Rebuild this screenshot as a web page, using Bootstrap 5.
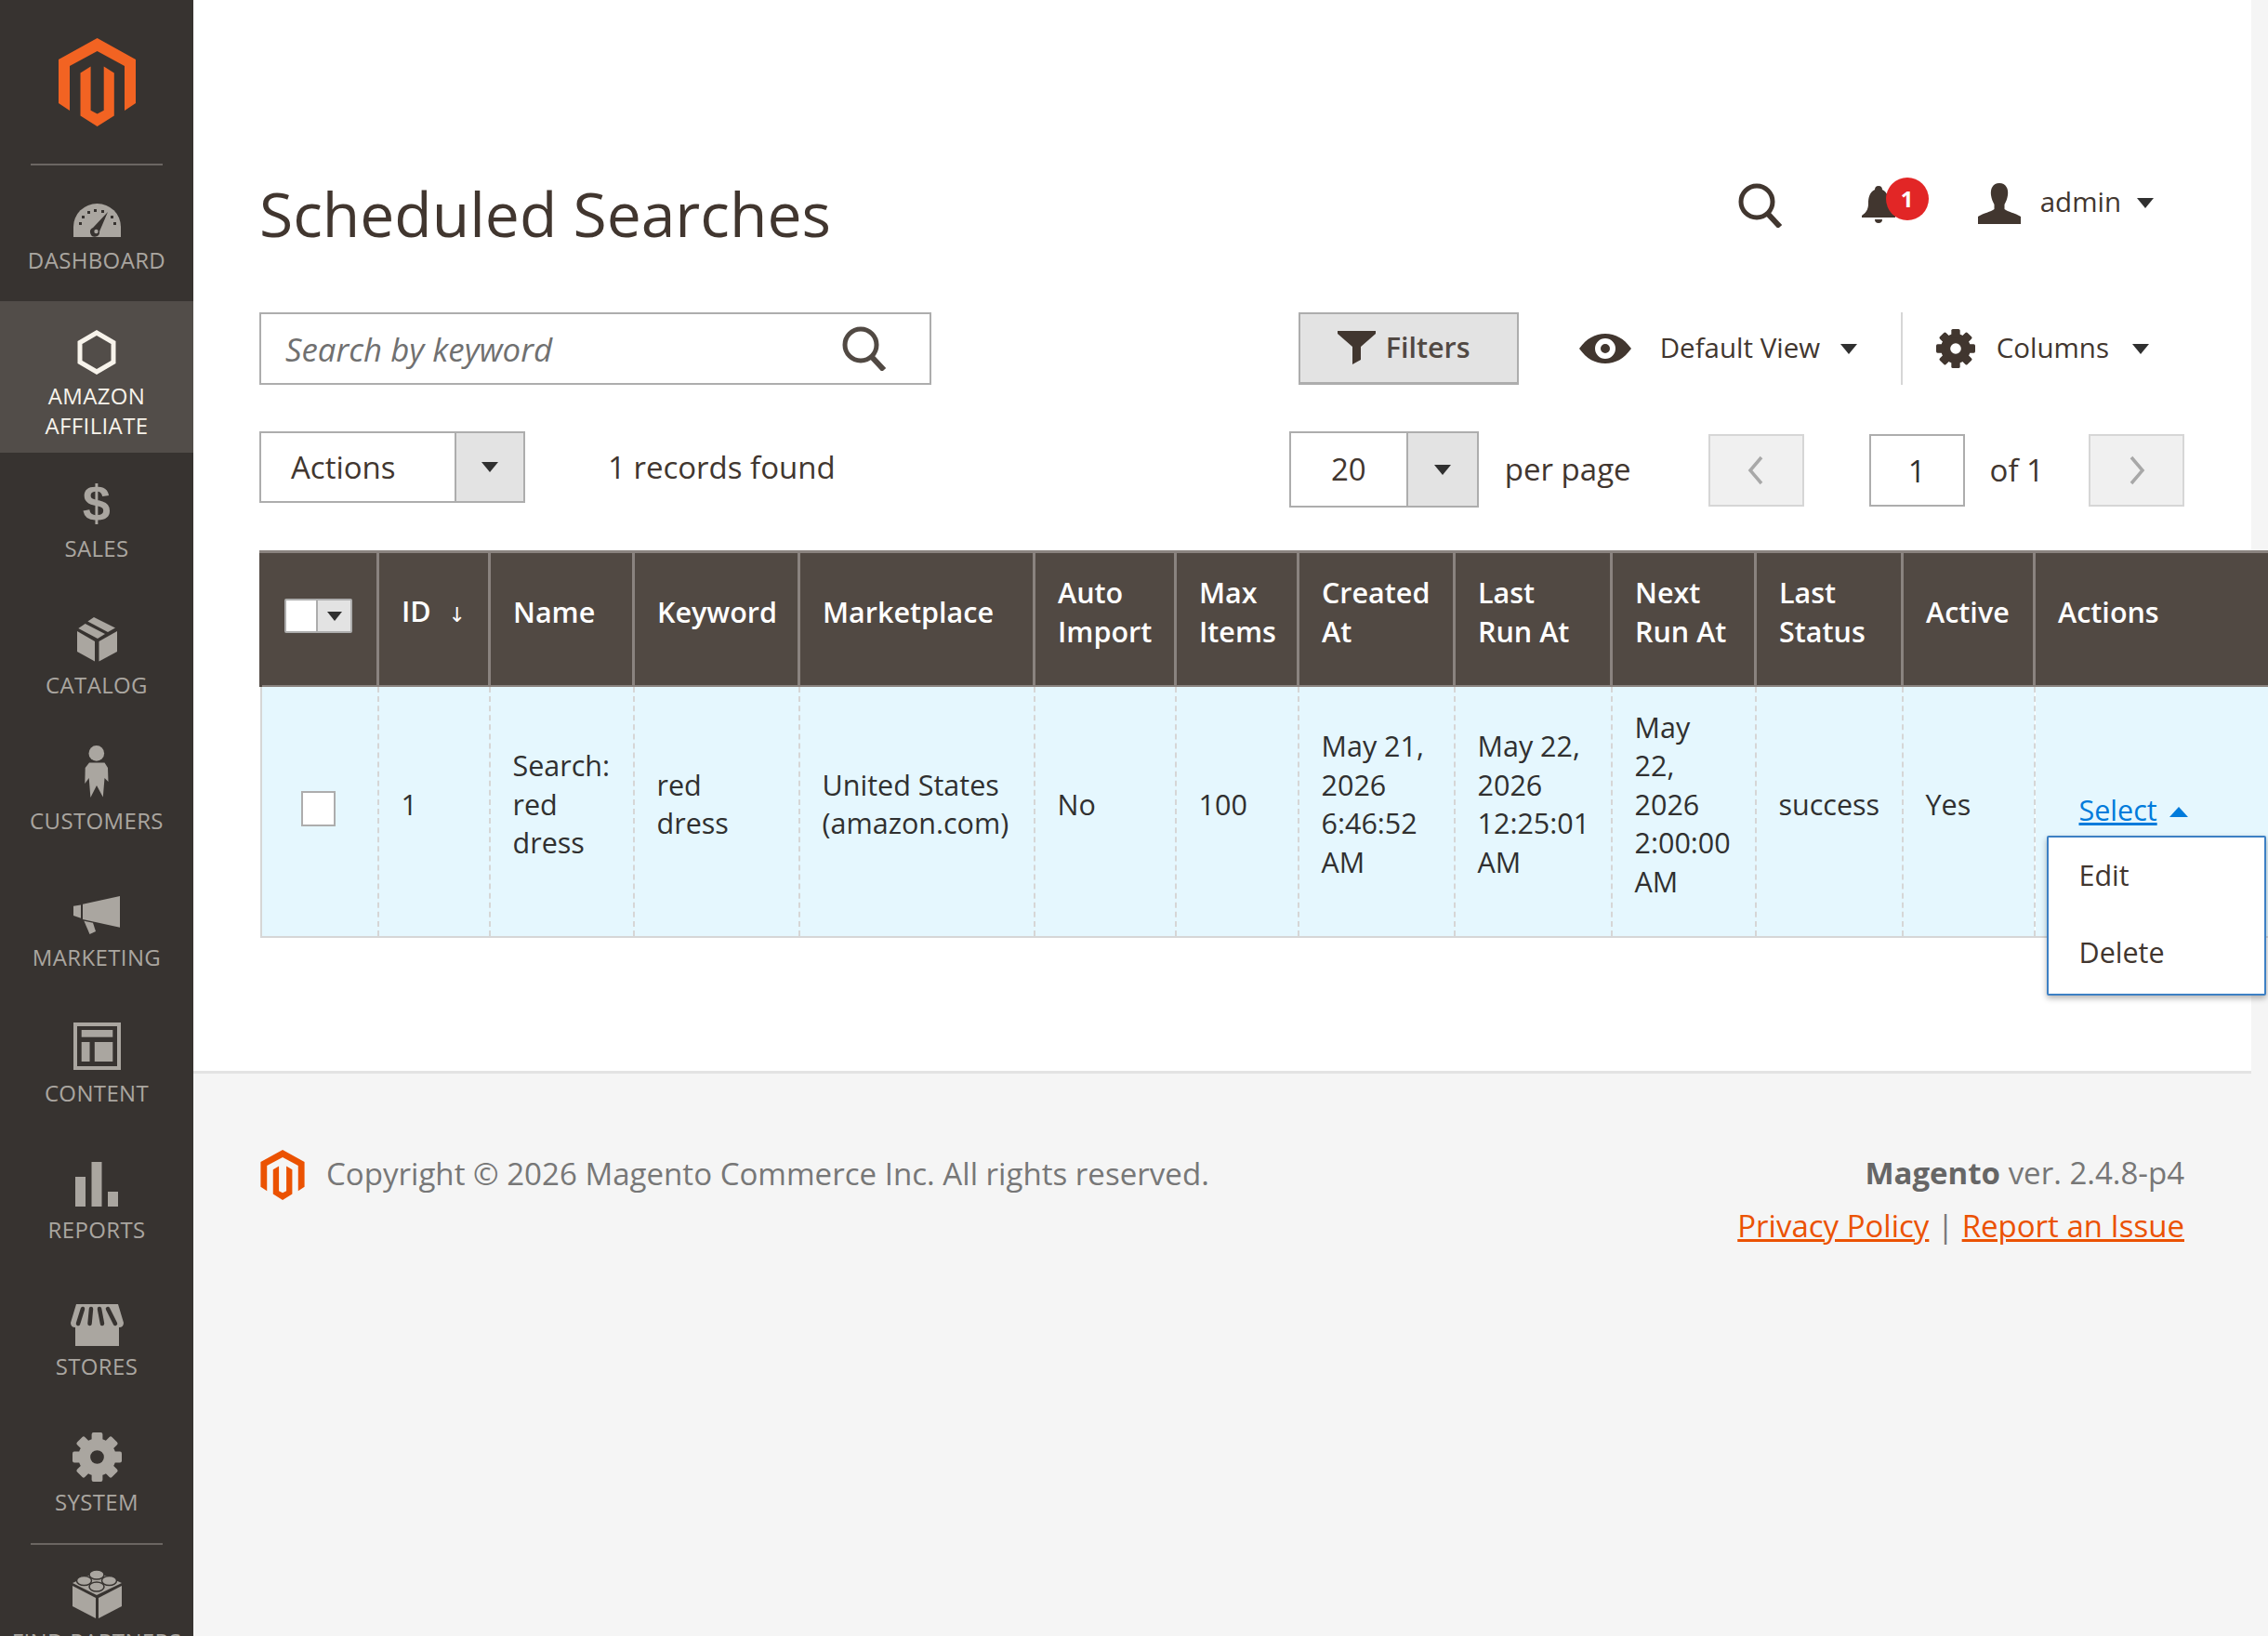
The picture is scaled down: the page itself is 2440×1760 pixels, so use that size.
<!DOCTYPE html>
<html lang="en">
<head>
  <meta charset="UTF-8">
  <title>Scheduled Searches</title>
  <link href="https://cdn.jsdelivr.net/npm/bootstrap@5.3.3/dist/css/bootstrap.min.css" rel="stylesheet">
  <style>
    html, body { height: 100%; }
    body { font-family: "Open Sans", "DejaVu Sans", sans-serif; font-size: 33px; color: #41362f; background: #f5f5f5; overflow: hidden; }
    .app-wrap { height: 1760px; }

    /* sidebar */
    .side-menu { width: 208px; flex: none; background: #373330; height: 1760px; overflow: hidden; }
    .logo-box { height: 178px; margin: 0 33px 0; border-bottom: 2px solid #6b6662; }
    .logo-box svg { width: 83px; height: 95px; margin-top: 41px; }
    .side-item { height: 146.6px; padding-top: 30px; color: #aaa6a0; font-size: 24px; line-height: 33px; letter-spacing: .015em; }
    .side-item:hover { color: #aaa6a0; }
    .logo-box + .side-item { height: 146px; padding-top: 29px; }
    .side-ico { height: 48px; }
    .side-ico svg { fill: currentColor; display: block; }
    .side-ico.ico-low svg { margin-bottom: -3px; }
    .side-lbl { margin-top: 8px; }
    .side-item.is-on { height: 163px; padding-top: 32px; background: #524d49; color: #f7f3eb; }
    .side-item.is-on .side-lbl { margin-top: 6px; line-height: 32px; }
    .side-item.is-on svg { margin-bottom: 1px; }
    .side-sep { height: 2px; margin: 0 33px; background: #6b6662; flex: none; }
    .side-item.is-partner { white-space: nowrap; padding-top: 27px; }
    .side-item.is-partner .side-ico { height: 52px; }
    .dollar-ico { font-family: "Liberation Sans", sans-serif; font-weight: 700; font-size: 54px; line-height: 48px; }

    /* content */
    .main-col { width: 2214px; flex: none; }
    .page-area { background: #fff; padding: 184px 72px 143px 71px; }
    .page-head { height: 152px; }
    .page-title { font-family: "Open Sans", sans-serif; font-size: 66px; font-weight: 400; line-height: 90px; color: #41362f; margin: 0; }
    .user-bar { padding: 9px 33px 0 0; height: 60px; font-size: 29.5px; }
    .top-search { width: 50px; height: 48px; margin: 4px 81px 0 0; color: #41362f; }
    .bell-box { width: 74px; height: 46px; margin-right: 53px; }
    .bell-box svg { position: absolute; left: 0; top: 4px; }
    .bell-num { position: absolute; left: 28px; top: -5px; width: 46px; height: 46px; background: #e22626; color: #fff; font-size: 24px; font-weight: 700; line-height: 46px; padding: 0; }
    .admin-name { margin: -2px 17px 0 21px; }
    .tri { display: inline-block; width: 0; height: 0; border-left: 9px solid transparent; border-right: 9px solid transparent; border-top: 11px solid #303030; }
    .tri-up { border-top: 0; border-bottom: 11px solid #007bdb; border-left-width: 10px; border-right-width: 10px; }

    .search-box { width: 723px; height: 78px; }
    .search-inp { height: 78px; border: 2px solid #adadad; border-radius: 0; font-size: 34.8px; padding: 0 100px 0 26px; color: #303030; box-shadow: none; }
    .search-inp::placeholder { color: #707070; font-style: italic; opacity: 1; }
    .search-ico { position: absolute; right: 46px; top: 15px; }
    .btn-filter { width: 237px; height: 78px; margin-left: auto; background: #e3e3e3; border: 2px solid #adadad; border-bottom-width: 3px; border-radius: 0; color: #514943; font-size: 30.5px; font-weight: 600; padding: 0 0 2px 40px; gap: 11px; }
    .btn-filter:hover { background: #e3e3e3; color: #514943; border-color: #adadad; }
    .view-tool { margin-left: 65px; width: 346px; font-size: 29.5px; }
    .view-name { margin: -2px 22px 0 31px; }
    .tool-sep { width: 2px; height: 78px; background: #d6d6d6; }
    .col-tool { margin-left: 36px; margin-right: 38px; font-size: 29.5px; }
    .col-name { margin: -2px 25px 0 23px; }

    .row-two { margin-top: 50px; height: 82px; }
    .sel-box { display: flex; border: 2px solid #adadad; background: #fff; height: 77px; color: #41362f; }
    .sel-text { padding: 0 32px; line-height: 73px; flex: 1; }
    .sel-arrow { background: #e3e3e3; border-left: 2px solid #adadad; display: flex; align-items: center; justify-content: center; }
    .sel-actions { width: 286px; }
    .sel-actions .sel-arrow { width: 74px; }
    .rec-found { margin-left: 89px; line-height: 77px; }
    .sel-pages { width: 204px; height: 82px; margin-left: auto; }
    .sel-pages .sel-text { text-align: center; padding: 0; line-height: 78px; }
    .sel-pages .sel-arrow { width: 76px; }
    .per-page { margin: 0 83px 0 28px; line-height: 82px; }
    .page-btn { width: 103px; height: 78px; background: #f0f0f0; border: 2px solid #d6d6d6; border-radius: 0; padding: 0; margin-top: 3px; }
    .page-btn svg { display: block; margin: auto; }
    .page-btn:disabled { background: #f0f0f0; border: 2px solid #d6d6d6; opacity: 1; }
    .page-inp { width: 103px; height: 78px; margin: 3px 27px 0 70px; border: 2px solid #adadad; border-radius: 0; text-align: center; font-size: 33px; color: #303030; padding: 0; }
    .page-of { margin-right: 48px; line-height: 84px; }

    .grid-wrap { margin: 46px -90px 0 0; }
    .grid-tbl { --bs-table-bg: transparent; table-layout: fixed; width: 2160px; margin: 0; border-collapse: collapse; line-height: 41.5px; font-size: 30.5px; }
    .grid-tbl th { background: #514943; color: #fff; font-weight: 600; vertical-align: middle; padding: 10px 23px 24px 24px; height: 144px; border: 2px solid #8a837f; border-width: 3px 3px 2px; }
    .grid-tbl th:first-child { border-left-color: #514943; }
    .grid-tbl th:last-child { border-right: 0; }
    .grid-tbl td { background: #e5f7fe; color: #303030; vertical-align: middle; padding: 23px 23px 38px 24px; border: 0; border-left: 2px dashed #d6d6d6; border-bottom: 2px solid #d6d6d6; }
    .grid-tbl td:first-child { border-left: 2px solid #d6d6d6; }
    .grid-tbl th:first-child { padding-left: 24px; }
    .sort-arrow { font-weight: 400; font-size: 22px; margin-left: 11px; }
    .head-check { width: 73px; height: 37px; margin: 8px 0 0 0; border: 2px solid #adadad; border-radius: 2px; background: #fff; }
    .head-check span { display: flex; align-items: center; justify-content: center; margin-left: auto; width: 37px; height: 100%; background: #e3e3e3; border-left: 2px solid #adadad; }
    .head-check .tri { border-left-width: 8px; border-right-width: 8px; border-top-width: 10px; }
    .row-check { width: 37px; height: 38px; margin: -5px 0 0 42px; border: 2px solid #adadad; background: #fff; border-radius: 0; display: block; }
    .act-cell { position: relative; overflow: visible; }
    .select-link { color: #007bdb; margin: 12px 0 0 23px; display: inline-block; }
    .select-link .tri { margin-left: 13px; vertical-align: 4px; }
    .act-menu { position: absolute; left: 12px; top: 160px; width: 236px; height: 172px; margin: 0; padding: 0; border: 2px solid #3d80c4; border-radius: 2px; box-shadow: 0 3px 6px rgba(0, 0, 0, .3); font-size: 30.5px; }
    .act-menu .dropdown-item { padding: 0 0 0 33px; height: 83px; line-height: 80px; color: #41362f; }

    /* footer */
    .foot-area { border-top: 3px solid #e3e3e3; padding: 78px 72px 0 71px; color: #777; }
    .foot-logo { width: 50px; height: 54px; margin: 4px 22px 0 0; }
    .foot-copy { line-height: 36px; margin-top: 12px; font-size: 33.1px; }
    .foot-right { line-height: 57px; }
    .foot-right a { color: #eb5202; }
    .foot-right b { font-weight: 700; color: #666; }
  </style>
</head>
<body>
  <svg class="d-none">
    <symbol id="mage-logo" viewBox="0 0 83 95">
      <path d="M41.6 0 83 23V70L71 78V30L41.6 14 12 30V78L0 70V23Z"/>
      <path d="M23.5 37.5 34.6 30.6V77.7L41.6 81.5 48.7 77.7V30.6L59.8 37.5V83.4L41.6 95 23.5 83.4Z"/>
    </symbol>
    <symbol id="loupe" viewBox="0 0 50 48">
      <circle cx="20" cy="20" r="17" fill="none" stroke="currentColor" stroke-width="5"/>
      <path d="M31 32 45 47" fill="none" stroke="currentColor" stroke-width="6"/>
    </symbol>
    <symbol id="gear" viewBox="0 0 54 54">
      <circle cx="27" cy="27" r="14" fill="none" stroke="currentColor" stroke-width="13"/>
      <g fill="currentColor">
        <rect x="21" y="0" width="12" height="12" rx="2"/>
        <rect x="21" y="0" width="12" height="12" rx="2" transform="rotate(45 27 27)"/>
        <rect x="21" y="0" width="12" height="12" rx="2" transform="rotate(90 27 27)"/>
        <rect x="21" y="0" width="12" height="12" rx="2" transform="rotate(135 27 27)"/>
        <rect x="21" y="0" width="12" height="12" rx="2" transform="rotate(180 27 27)"/>
        <rect x="21" y="0" width="12" height="12" rx="2" transform="rotate(225 27 27)"/>
        <rect x="21" y="0" width="12" height="12" rx="2" transform="rotate(270 27 27)"/>
        <rect x="21" y="0" width="12" height="12" rx="2" transform="rotate(315 27 27)"/>
      </g>
    </symbol>
  </svg>

  <div class="app-wrap d-flex">
    <!-- menu -->
    <nav class="side-menu d-flex flex-column">
      <div class="logo-box text-center flex-shrink-0">
        <svg fill="#f26322"><use href="#mage-logo"/></svg>
      </div>
      <a href="#" class="side-item d-flex flex-column align-items-center text-center text-decoration-none flex-shrink-0">
        <div class="side-ico d-flex align-items-end">
          <svg width="51" height="36" viewBox="0 0 51 36">
            <path d="M0 36V25A25.5 25 0 0 1 51 25V36Z"/>
            <path d="M37 9 28 30A5 5 0 1 1 21 26Z" fill="#373330"/>
            <circle cx="24.5" cy="30" r="2.2"/>
            <g fill="#373330"><rect x="6" y="20" width="3" height="3"/><rect x="9" y="13" width="3" height="3"/><rect x="15" y="8" width="3" height="3"/><rect x="22" y="6" width="3" height="3"/><rect x="30" y="7" width="3" height="3"/><rect x="40" y="13" width="3" height="3"/><rect x="43" y="20" width="3" height="3"/></g>
          </svg>
        </div>
        <div class="side-lbl">DASHBOARD</div>
      </a>
      <a href="#" class="side-item is-on d-flex flex-column align-items-center text-center text-decoration-none flex-shrink-0">
        <div class="side-ico d-flex align-items-end">
          <svg width="42" height="48" viewBox="0 0 42 48"><path d="M21 3 39 13.5V34.500L21 45 3 34.500V13.500Z" fill="none" stroke="currentColor" stroke-width="5"/></svg>
        </div>
        <div class="side-lbl">AMAZON<br>AFFILIATE</div>
      </a>
      <a href="#" class="side-item d-flex flex-column align-items-center text-center text-decoration-none flex-shrink-0">
        <div class="side-ico dollar-ico">$</div>
        <div class="side-lbl">SALES</div>
      </a>
      <a href="#" class="side-item d-flex flex-column align-items-center text-center text-decoration-none flex-shrink-0">
        <div class="side-ico d-flex align-items-end">
          <svg width="43" height="48" viewBox="0 0 43 48"><path d="M0 15 19 26V47.500L0 37Z"/><path d="M23.500 26 43 15V37L23.500 47.500Z"/><path d="M18 0 41 11.500 33 16 11.400 4.600Z"/><path d="M1.300 12 8.700 7 30 18 22 23Z"/></svg>
        </div>
        <div class="side-lbl">CATALOG</div>
      </a>
      <a href="#" class="side-item d-flex flex-column align-items-center text-center text-decoration-none flex-shrink-0">
        <div class="side-ico d-flex align-items-end">
          <svg width="26" height="56" viewBox="0 0 26 56"><ellipse cx="12.800" cy="8.400" rx="8.300" ry="8.400"/><path d="M5 18.500H21.500L25 24 25.500 39 21.500 35 19.800 55.500 13 43 6.400 56 4.700 35 .3 41 .7 24Z"/></svg>
        </div>
        <div class="side-lbl">CUSTOMERS</div>
      </a>
      <a href="#" class="side-item d-flex flex-column align-items-center text-center text-decoration-none flex-shrink-0">
        <div class="side-ico d-flex align-items-end">
          <svg width="50" height="41" viewBox="0 0 50 41"><path d="M0 10.700 8 9.600V23.700L0 21Z"/><path d="M10 8.800 50 0V33.700L10 25Z"/><path d="M11.400 26.800 21 28.700 24 38 17.500 41Z"/></svg>
        </div>
        <div class="side-lbl">MARKETING</div>
      </a>
      <a href="#" class="side-item d-flex flex-column align-items-center text-center text-decoration-none flex-shrink-0">
        <div class="side-ico d-flex align-items-end">
          <svg width="51" height="51" viewBox="0 0 51 51"><path d="M0 0H51V51H0ZM4 4V47H47V4Z" fill-rule="evenodd"/><rect x="8.700" y="8" width="33.600" height="7.700"/><rect x="8.700" y="21" width="8.800" height="21"/><rect x="22.800" y="21" width="19.500" height="21"/></svg>
        </div>
        <div class="side-lbl">CONTENT</div>
      </a>
      <a href="#" class="side-item d-flex flex-column align-items-center text-center text-decoration-none flex-shrink-0">
        <div class="side-ico d-flex align-items-end">
          <svg width="46" height="48" viewBox="0 0 46 48"><rect x="0" y="16" width="11" height="32"/><rect x="17.500" y="0" width="11" height="48"/><rect x="35" y="32" width="11" height="16"/></svg>
        </div>
        <div class="side-lbl">REPORTS</div>
      </a>
      <a href="#" class="side-item d-flex flex-column align-items-center text-center text-decoration-none flex-shrink-0">
        <div class="side-ico ico-low d-flex align-items-end">
          <svg width="57" height="45" viewBox="0 0 57 45">
            <path d="M6 0H51L57 20Q57 25 52 25V45H5V25Q0 25 0 20Z"/>
            <path d="M13 5 8 21M22 5 20.500 21M31 5 34 21M40 5 48 21" fill="none" stroke="#373330" stroke-width="4.500" stroke-linecap="round"/>
          </svg>
        </div>
        <div class="side-lbl">STORES</div>
      </a>
      <a href="#" class="side-item d-flex flex-column align-items-center text-center text-decoration-none flex-shrink-0">
        <div class="side-ico ico-low d-flex align-items-end">
          <svg width="53" height="53"><use href="#gear"/></svg>
        </div>
        <div class="side-lbl">SYSTEM</div>
      </a>
      <div class="side-sep"></div>
      <a href="#" class="side-item is-partner d-flex flex-column align-items-center text-center text-decoration-none flex-shrink-0">
        <div class="side-ico d-flex align-items-end">
          <svg width="53" height="53" viewBox="0 0 53 53">
            <path d="M0 15 26 3 53 15 26 28Z"/><path d="M0 18 25 31V53L0 40Z"/><path d="M28 31 53 18V40L28 53Z"/>
            <g stroke="#373330" stroke-width="1.500"><ellipse cx="26" cy="6" rx="8" ry="5"/><ellipse cx="12.500" cy="12.500" rx="8" ry="5"/><ellipse cx="39.500" cy="12.500" rx="8" ry="5"/><ellipse cx="26" cy="19" rx="8" ry="5"/></g>
          </svg>
        </div>
        <div class="side-lbl">FIND PARTNERS</div>
      </a>
    </nav>

    <div class="main-col d-flex flex-column">
      <main class="page-area">
        <div class="page-head d-flex justify-content-between align-items-start">
          <h1 class="page-title">Scheduled Searches</h1>
          <div class="user-bar d-flex align-items-center">
            <svg class="top-search"><use href="#loupe"/></svg>
            <div class="bell-box position-relative">
              <svg width="40" height="40" viewBox="0 0 40 40" fill="#41362f"><path d="M20 0C23 0 24 2 24 4 30 7 31 13 31 19 31 26 34 29 38 32V34H2V32C6 29 9 26 9 19 9 13 10 7 16 4 16 2 17 0 20 0Z"/><path d="M16 36H24A4 4 0 0 1 16 36Z"/></svg>
              <span class="badge rounded-pill bell-num">1</span>
            </div>
            <svg width="46" height="44" viewBox="0 0 46 44" fill="#41362f"><path d="M23 0C30 0 33 6 32 13 31.500 17 30 20 28.500 23V28C32 31 40 32 46 36V44H0V36C6 32 14 31 17.500 28V23C16 20 14.500 17 14 13 13 6 16 0 23 0Z"/></svg>
            <span class="admin-name">admin</span>
            <span class="tri"></span>
          </div>
        </div>

        <div class="d-flex align-items-center">
          <div class="search-box position-relative">
            <input class="form-control search-inp" type="text" placeholder="Search by keyword">
            <svg class="search-ico" width="50" height="48" color="#514943"><use href="#loupe"/></svg>
          </div>
          <button class="btn btn-filter d-flex align-items-center" type="button">
            <svg width="41" height="36" viewBox="0 0 41 36" fill="#41362f"><path d="M0 0H41V3L25 17V31L16 36V17L0 3Z"/></svg>
            Filters
          </button>
          <div class="view-tool d-flex align-items-center">
            <svg width="56" height="32" viewBox="0 0 56 32" fill="#41362f"><path fill-rule="evenodd" d="M0 16C8 5 17 0 28 0S48 5 56 16C48 27 39 32 28 32S8 27 0 16ZM28 5A11 11 0 1 0 28 27 11 11 0 0 0 28 5ZM28 11A5 5 0 1 1 28 21 5 5 0 0 1 28 11Z"/></svg>
            <span class="view-name">Default View</span>
            <span class="tri"></span>
          </div>
          <div class="tool-sep"></div>
          <div class="col-tool d-flex align-items-center">
            <svg width="42" height="42" color="#41362f"><use href="#gear"/></svg>
            <span class="col-name">Columns</span>
            <span class="tri"></span>
          </div>
        </div>

        <div class="row-two d-flex align-items-start">
          <div class="sel-box sel-actions">
            <div class="sel-text">Actions</div>
            <div class="sel-arrow"><span class="tri"></span></div>
          </div>
          <div class="rec-found">1 records found</div>
          <div class="sel-box sel-pages">
            <div class="sel-text">20</div>
            <div class="sel-arrow"><span class="tri"></span></div>
          </div>
          <div class="per-page">per page</div>
          <button class="btn page-btn" type="button" disabled aria-label="Previous page">
            <svg width="18" height="32" viewBox="0 0 18 32"><path d="M15 2 3 16 15 30" fill="none" stroke="#a8a8a8" stroke-width="3.500"/></svg>
          </button>
          <input class="form-control page-inp" type="text" value="1">
          <div class="page-of">of 1</div>
          <button class="btn page-btn" type="button" disabled aria-label="Next page">
            <svg width="18" height="32" viewBox="0 0 18 32"><path d="M3 2 15 16 3 30" fill="none" stroke="#a8a8a8" stroke-width="3.500"/></svg>
          </button>
        </div>

        <div class="grid-wrap">
          <table class="table grid-tbl">
            <colgroup>
              <col width="126"><col width="120"><col width="155"><col width="178"><col width="253"><col width="152"><col width="132"><col width="168"><col width="169"><col width="155"><col width="158"><col width="142"><col width="252">
            </colgroup>
            <thead>
              <tr>
                <th><div class="head-check d-flex"><span><i class="tri"></i></span></div></th>
                <th>ID <span class="sort-arrow">↓</span></th>
                <th>Name</th>
                <th>Keyword</th>
                <th>Marketplace</th>
                <th>Auto Import</th>
                <th>Max Items</th>
                <th>Created At</th>
                <th>Last Run At</th>
                <th>Next Run At</th>
                <th>Last Status</th>
                <th>Active</th>
                <th>Actions</th>
              </tr>
            </thead>
            <tbody>
              <tr>
                <td class="p-0"><span class="row-check"></span></td>
                <td>1</td>
                <td>Search: red dress</td>
                <td>red dress</td>
                <td>United States (amazon.com)</td>
                <td>No</td>
                <td>100</td>
                <td>May 21, 2026 6:46:52 AM</td>
                <td>May 22, 2026 12:25:01 AM</td>
                <td>May 22, 2026 2:00:00 AM</td>
                <td>success</td>
                <td>Yes</td>
                <td class="act-cell">
                  <a href="#" class="select-link">Select<span class="tri tri-up"></span></a>
                  <div class="dropdown-menu show act-menu">
                    <a class="dropdown-item" href="#">Edit</a>
                    <a class="dropdown-item" href="#">Delete</a>
                  </div>
                </td>
              </tr>
            </tbody>
          </table>
        </div>
      </main>

      <footer class="foot-area d-flex justify-content-between flex-grow-1">
        <div class="d-flex align-items-start">
          <svg class="foot-logo" fill="#eb5202"><use href="#mage-logo"/></svg>
          <div class="foot-copy">Copyright © 2026 Magento Commerce Inc. All rights reserved.</div>
        </div>
        <div class="foot-right text-end">
          <div><b>Magento</b> ver. 2.4.8-p4</div>
          <div><a href="#">Privacy Policy</a> | <a href="#">Report an Issue</a></div>
        </div>
      </footer>
    </div>
  </div>

  <script src="https://cdn.jsdelivr.net/npm/bootstrap@5.3.3/dist/js/bootstrap.bundle.min.js"></script>
</body>
</html>
